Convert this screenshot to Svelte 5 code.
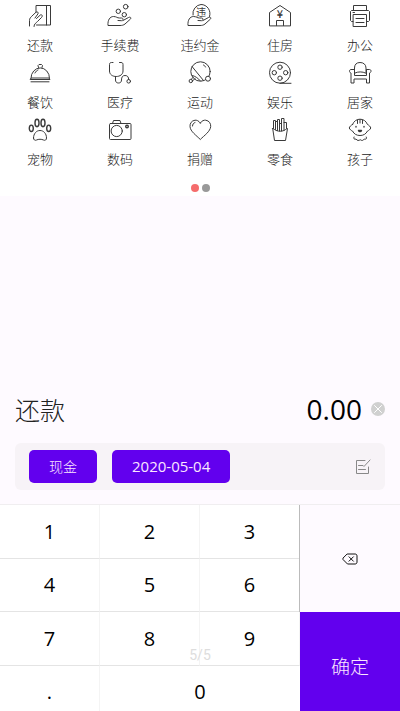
<script lang="ts">
  const categories = [
    { name: '还款', icon: 'card' },
    { name: '手续费', icon: 'coins' },
    { name: '违约金', icon: 'penalty' },
    { name: '住房', icon: 'house' },
    { name: '办公', icon: 'printer' },
    { name: '餐饮', icon: 'dish' },
    { name: '医疗', icon: 'medical' },
    { name: '运动', icon: 'sport' },
    { name: '娱乐', icon: 'film' },
    { name: '居家', icon: 'chair' },
    { name: '宠物', icon: 'paw' },
    { name: '数码', icon: 'camera' },
    { name: '捐赠', icon: 'heart' },
    { name: '零食', icon: 'fries' },
    { name: '孩子', icon: 'baby' }
  ];

  const keys = ['1', '2', '3', '4', '5', '6', '7', '8', '9', '.', '0'];

  let selected = $state('还款');
  let input = $state('');
  let note = $state(false);

  const amount = $derived(Number(input || 0).toFixed(2));

  function press(key: string) {
    if (key === '.' && input.includes('.')) return;
    input += key === '.' && !input ? '0.' : key;
  }

  function backspace() {
    input = input.slice(0, -1);
  }
</script>

{#snippet hand()}
  <path d="M1 22.5H0C-.5 17 2 13.500 5.500 13.500c3 0 3.500 1.500 6 1.500h2c2 0 2 2.500 0 2.700L10 17.500M15 17.500l5.500-3c2-1 3 .5 1.800 1.700L17 21c-1.500 1.200-3 1.500-5 1.500H1" />
{/snippet}

<div class="page">
  <section class="categories">
    <div class="grid">
      {#each categories as item}
        <button type="button" class="category" onclick={() => (selected = item.name)}>
          <svg class="icon" viewBox="0 0 24 24" aria-hidden="true">
            {#if item.icon === 'card'}
              <path d="M8 9V2.500h14.500v19.500H8.500M18.500 2.500V22M1.500 23v-5.500c0-2 1-3 2.200-4.200L8 9.200c1.300-1 2.700.3 2 1.600L7 15M6 23.500c0-2.500 2-3.500 3.500-5l4-4c1.600-1.600.3-3.500-1.200-2.500L8.500 15.500" />
            {:else if item.icon === 'coins'}
              <circle cx="17.7" cy="3.7" r="2.3" />
              <circle cx="10.3" cy="8.300" r="2.2" />
              <circle cx="16.3" cy="11.700" r="2.2" />
              {@render hand()}
            {:else if item.icon === 'penalty'}
              <path d="M5 12A9 9 0 0 1 13 1.500a9 9 0 0 1 8.500 12" />
              <text x="13" y="13" text-anchor="middle">违</text>
              {@render hand()}
            {:else if item.icon === 'house'}
              <path d="M1.500 22.500V9.500L12 2.500l10.500 7v13zM8.500 22.500v-5h7v5" />
              <text x="12" y="15" text-anchor="middle" class="yen">¥</text>
            {:else if item.icon === 'printer'}
              <path d="M5.500 7V2.500h13V7M5 18.500H3.500l-1-1V8.500l1-1h17l1 1v9l-1 1H19M5.500 11.500h13v12h-13zM8 15.500h8M8 19.500h8M5 9.500h1.500" />
            {:else if item.icon === 'dish'}
              <path d="M3 18a9.200 10 0 0 1 18.500 0M2.500 19.500h19.500l-1-1.500H3.500zM3 21.800h18M10.500 7.500 10 5.500l1-1h2.500l1 1-.5 2M7 13c.7-1.500 1.700-2.500 3-3" />
            {:else if item.icon === 'medical'}
              <path d="M5 2.500H3.500c-1.500 0-2 .8-2 2V11c0 3.500 3 5.500 6.700 5.500S15 14.500 15 11V4.500c0-1.200-.5-2-2-2h-1.500M7.500 16.500V20c0 2 1.200 3 3 3s3-1 3-3c0-2.800 1-4.500 3.500-4.500s3.700 1.500 3.700 4" />
              <circle cx="20.7" cy="21.300" r="1.800" />
            {:else if item.icon === 'sport'}
              <circle cx="12.500" cy="11.500" r="9.700" />
              <path d="M4 6.500 15.500 20.500M4.500 15.500c3 1 5.500 2.500 8 5.500M15.500 5c1 .4 1.700 1.200 2 2M5.500 17 3 19.500M7 18.500l-2.500 2.500" />
              <circle cx="20" cy="18.700" r="2.500" class="solid" />
              <circle cx="2.800" cy="21" r="1.700" class="solid" />
            {:else if item.icon === 'film'}
              <circle cx="12" cy="12.700" r="10.500" />
              <circle cx="12" cy="7.200" r="2.200" />
              <circle cx="6.300" cy="12.700" r="2.200" />
              <circle cx="17.700" cy="12.700" r="2.200" />
              <circle cx="12" cy="18.200" r="2.200" />
              <path d="M12 23.300h11" />
            {:else if item.icon === 'chair'}
              <path d="M6.500 13V8C6.500 4.500 8.500 2.500 12 2.500s6 2 6 5.500v5M7 13c3-1.500 7.500-1.500 10.500 0M6 9.500H3c-2 0-2 3 0 3.500v10h3v-4h12.500v4h3V13c2-.5 2-3.500 0-3.500h-3M6.500 10v5.500h12V10" />
            {:else if item.icon === 'paw'}
              <g class="bold">
                <ellipse cx="3.300" cy="11.300" rx="2" ry="3.200" />
                <ellipse cx="9" cy="6" rx="2" ry="3.700" />
                <ellipse cx="15" cy="6" rx="2" ry="3.700" />
                <ellipse cx="20.700" cy="11.300" rx="2" ry="3.200" />
              </g>
              <path d="M5.500 21c0-4.500 3-7.500 6.500-7.500s6.500 3 6.500 7.500c0 2-1.500 2.800-3 2-2-1-5-1-7 0-1.500.8-3 0-3-2z" />
            {:else if item.icon === 'camera'}
              <rect x="1.500" y="6.500" width="21.500" height="16" rx="1" />
              <path d="m4.500 6.500 1-3h6.500l1 3" />
              <circle cx="8.700" cy="14" r="5.600" />
              <circle cx="19" cy="9.500" r="1.300" class="bold" />
            {:else if item.icon === 'heart'}
              <path d="M12.300 6C10.500 3.500 8.500 3 7 3.200 3.500 3.700 1.800 6.500 2 9.500c.3 5 6.500 9 10.300 13 3.900-4 10-8 10.400-13 .2-3-1.500-5.800-5-6.300C16 3 14 3.500 12.300 6zM4.500 9c0-1.700 1-3 2.500-3.500" />
            {:else if item.icon === 'fries'}
              <path d="m4.700 11.500 1.800 12h11l2-12c-1.500 0-2.500 2.700-7.400 2.700s-5.900-2.700-7.400-2.700zM5.500 11.500v-8h2v9M7.500 4.500h2v9M9.500 9V2.500h2V14M11.500 6.500h2V14M13.500 9V1.500h2.500v12M16 5.500h2.500v6" />
            {:else}
              <path d="M4.500 7.500C6 4 8.500 2.200 12 2.200s6 1.800 7.500 5.300c1.700.8 2.700 2 3.300 3.500-.8 1.500-1.800 2.500-3.300 3-1.500 3-4 4.500-7.500 4.500S6 17 4.500 14c-1.500-.5-2.500-1.500-3.300-3 .6-1.500 1.600-2.700 3.300-3.500zM9.500 3v3.500M12 2.500v3.500M14.500 3v3.500M6 20c-1 1.500.5 2.800 2 2 1 1.800 3 1.800 4.200.7 1.300 1.100 3.100 1.100 4.100-.7 1.500.8 3-.5 2-2" />
              <path class="bold" d="M8 9.500v.5M16 9.500v.5M10.500 13.500h3c-.5 1.500-2.500 1.500-3 0z" />
            {/if}
          </svg>
          <span>{item.name}</span>
        </button>
      {/each}
    </div>
    <div class="dots">
      <i class="dot active"></i>
      <i class="dot"></i>
    </div>
  </section>

  <section class="entry">
    <div class="summary">
      <span class="title">{selected}</span>
      <output class="amount">{amount}</output>
      <button type="button" class="clear" aria-label="清除" onclick={() => (input = '')}>
        <svg viewBox="0 0 14 14"><path d="m3.500 3.500 7 7m0-7-7 7" /></svg>
      </button>
    </div>
    <div class="options">
      <button type="button" class="chip">现金</button>
      <button type="button" class="chip">2020-05-04</button>
      <button type="button" class="edit" aria-label="备注" onclick={() => (note = !note)}>
        <svg viewBox="0 0 16 16">
          <path d="M10 1.500H1.500v13h12V8" />
          <path d="M3.500 6.500H8M3.500 10.500h7M9 7.500l6-6.500" />
        </svg>
      </button>
    </div>
  </section>

  <section class="keypad">
    <div class="keys">
      {#each keys as key}
        <button type="button" class="key" class:wide={key === '0'} onclick={() => press(key)}>{key}</button>
      {/each}
      <button type="button" class="backspace" aria-label="退格" onclick={backspace}>
        <svg viewBox="0 0 16 12">
          <path d="M5.500 1H13c1.300 0 2 .7 2 2v6c0 1.300-.7 2-2 2H5.500L1 6.500v-1zM7 3.800l4.400 4.400m0-4.400L7 8.200" />
        </svg>
      </button>
      <button type="button" class="confirm">确定</button>
    </div>
    <span class="counter">5/5</span>
  </section>
</div>

<style>
  :global(body) {
    margin: 0;
    background: #fefaff;
  }

  .page {
    display: flex;
    flex-direction: column;
    height: 100vh;
    overflow: hidden;
    background: #fefaff;
    color: #333;
    font-family: 'Open Sans', 'Noto Sans CJK SC', sans-serif;
  }

  button {
    margin: 0;
    padding: 0;
    border: 0;
    background: none;
    color: inherit;
    font: inherit;
    cursor: pointer;
  }

  svg {
    display: block;
    fill: none;
    stroke: currentColor;
    stroke-linecap: round;
    stroke-linejoin: round;
  }

  .categories {
    flex: none;
    padding: 3px 0 3px;
    background: #fff;
  }

  .grid {
    display: grid;
    grid-template-columns: repeat(5, 1fr);
  }

  .category {
    display: flex;
    flex-direction: column;
    align-items: center;
    gap: 8px;
    padding-bottom: 5px;
    color: #222;
    font-family: 'Noto Sans CJK SC', sans-serif;
    font-size: 13px;
    font-weight: 300;
    line-height: 20px;
  }

  .icon {
    width: 24px;
    height: 24px;
    overflow: visible;
    color: #3a3a3a;
  }

  .icon text {
    fill: currentColor;
    stroke: none;
    font-size: 10px;
    font-weight: 400;
  }

  .icon .yen {
    font-size: 11px;
    font-weight: 500;
  }

  .bold {
    stroke-width: 1.4;
  }

  .solid {
    fill: #fff;
  }

  .dots {
    display: flex;
    justify-content: center;
    gap: 3px;
    padding: 10px 0 1px;
  }

  .dot {
    width: 8px;
    height: 8px;
    border-radius: 50%;
    background: #999;
  }

  .dot.active {
    background: #f56c6c;
  }

  .entry {
    flex: none;
    margin-top: auto;
    padding: 0 15px 14px;
  }

  .summary {
    display: flex;
    align-items: center;
    margin-bottom: 16px;
    line-height: 36px;
  }

  .title {
    flex: 1;
    color: #222;
    font-family: 'Noto Sans CJK SC', sans-serif;
    font-size: 25px;
    font-weight: 300;
  }

  .amount {
    color: #000;
    font-size: 28px;
  }

  .clear {
    margin-left: 9px;
    border-radius: 50%;
    background: #d0d0d0;
    color: #fff;
  }

  .clear svg {
    width: 14px;
    height: 14px;
  }

  .options {
    display: flex;
    align-items: center;
    gap: 15px;
    padding: 7px 14px;
    border-radius: 6px;
    background: #f7f3f7;
  }

  .chip {
    padding: 0 20px;
    border-radius: 5px;
    background: #6200ee;
    color: #fbe6ff;
    font-size: 15px;
    line-height: 33px;
  }

  .chip:first-child {
    font-size: 14px;
    font-weight: 300;
  }

  .edit {
    margin-left: auto;
    color: #888;
  }

  .edit svg {
    width: 16px;
    height: 16px;
  }

  /* the last row of keys runs slightly past the bottom edge */
  .keypad {
    position: relative;
    flex: none;
    height: 207px;
    overflow: hidden;
  }

  .keys {
    display: grid;
    grid-template-columns: repeat(4, 1fr);
    grid-template-rows: repeat(4, 1fr);
    height: 215px;
    box-sizing: border-box;
    border-top: 1px solid #f0eef0;
  }

  .key {
    border-right: 1px solid #f4f4f4;
    border-bottom: 1px solid #e4e4e4;
    background: #fff;
    color: #000;
    font-size: 20px;
  }

  .wide {
    grid-column: 2 / 4;
    border-right: 0;
  }

  .backspace {
    grid-area: 1 / 4 / 3 / 5;
    display: flex;
    align-items: center;
    justify-content: center;
    border-left: 1px solid #bbb;
    margin-left: -1px;
    color: #111;
  }

  .backspace svg {
    width: 16px;
    height: 12px;
  }

  .confirm {
    grid-area: 3 / 4 / 5 / 5;
    background: #6200ee;
    color: #fbe6ff;
    font-family: 'Noto Sans CJK SC', sans-serif;
    font-size: 19px;
    font-weight: 300;
  }

  .counter {
    position: absolute;
    right: 0;
    bottom: 46px;
    left: 0;
    color: #ddd;
    font-family: Roboto, sans-serif;
    font-size: 14px;
    line-height: 20px;
    text-align: center;
    pointer-events: none;
  }
</style>
